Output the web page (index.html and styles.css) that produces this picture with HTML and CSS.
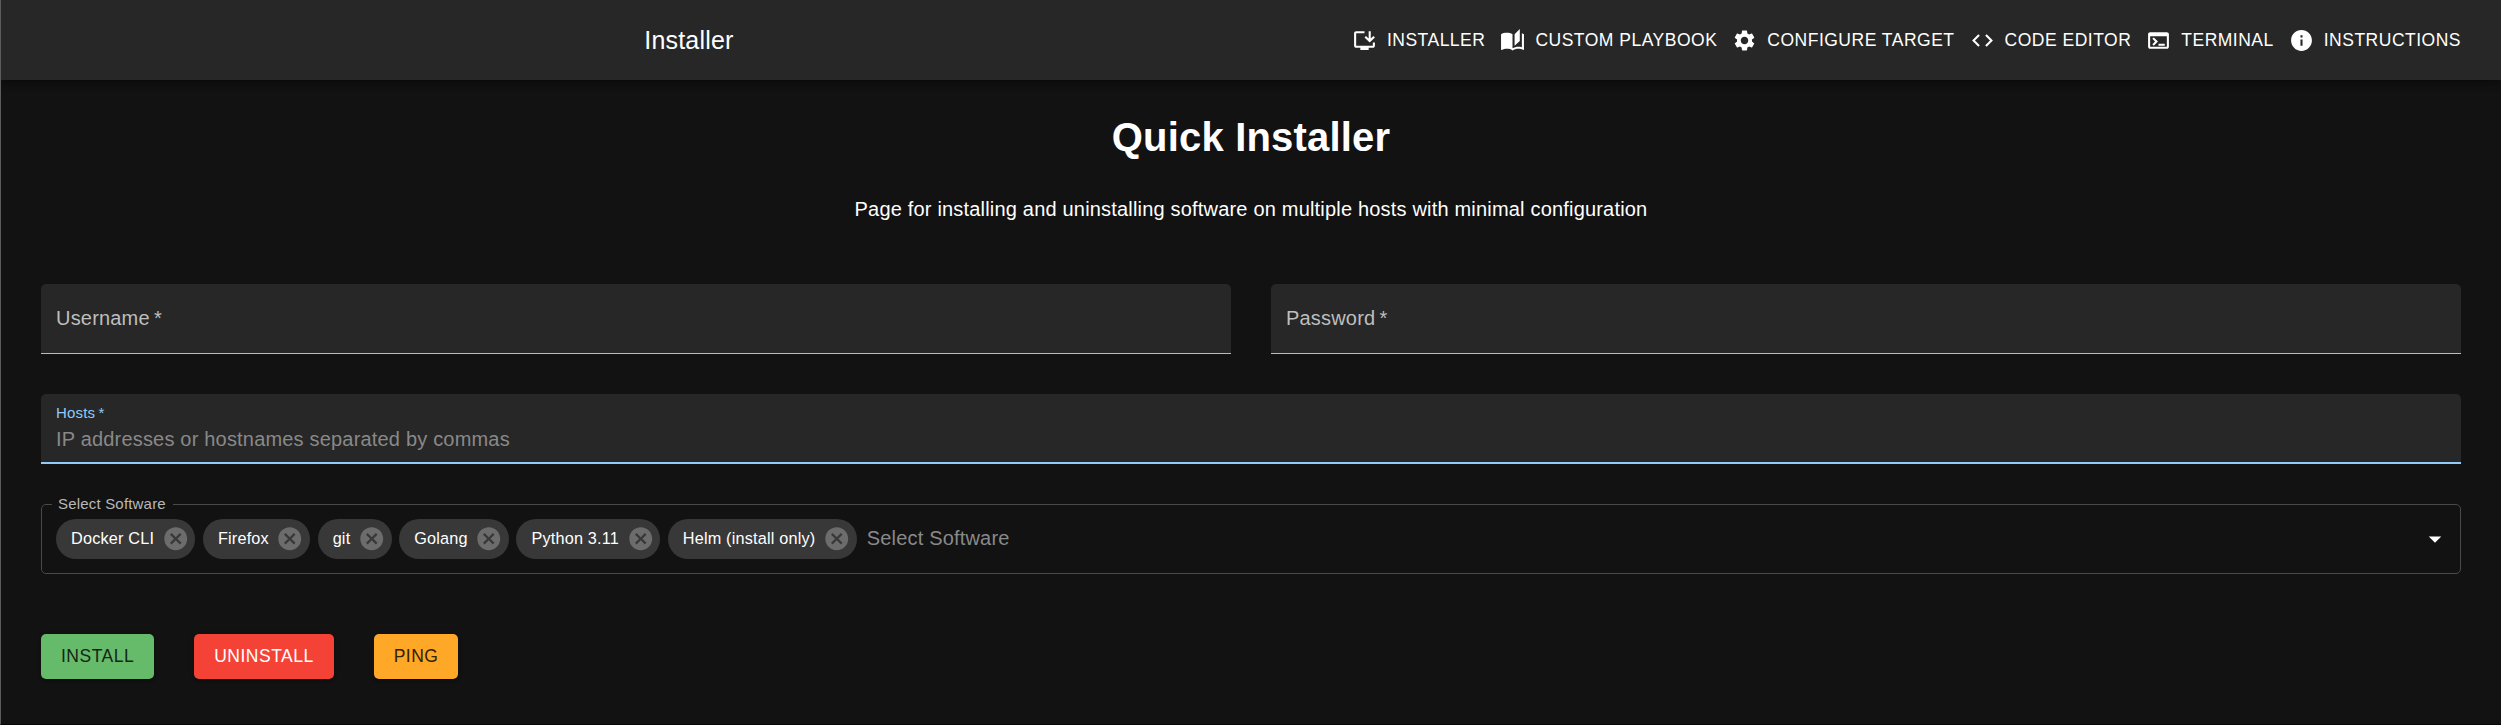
FILE: index.html
```html
<!DOCTYPE html>
<html lang="en">
<head>
<meta charset="utf-8">
<title>Quick Installer</title>
<link rel="stylesheet" href="styles.css">
</head>
<body>
<svg class="defs" width="0" height="0" aria-hidden="true">
  <symbol id="cancel" viewBox="0 0 24 24"><path d="M12 2C6.47 2 2 6.47 2 12s4.47 10 10 10 10-4.47 10-10S17.53 2 12 2zm5 13.59L15.59 17 12 13.41 8.41 17 7 15.59 10.59 12 7 8.41 8.41 7 12 10.59 15.59 7 17 8.41 13.41 12 17 15.59z"/></symbol>
</svg>
<header class="appbar">
  <div class="appbar-title">Installer</div>
  <nav class="nav">
    <a class="nav-item"><svg class="nav-icon" viewBox="0 0 24 24"><path d="M20 17H4V5h8V3H4c-1.1 0-2 .9-2 2v12c0 1.1.9 2 2 2h4v2h8v-2h4c1.1 0 2-.9 2-2v-3h-2v3z"/><path d="m17 14 5-5-1.41-1.41L18 10.17V3h-2v7.17l-2.59-2.58L12 9z"/></svg><span>INSTALLER</span></a>
    <a class="nav-item"><svg class="nav-icon" viewBox="0 0 24 24"><path d="m19 1-5 5v11l5-4.500V1zM1 6v14.650c0 .25.25.5.5.5.1 0 .15-.05.25-.05C3.1 20.450 5.050 20 6.500 20c1.950 0 4.050.4 5.500 1.500V6c-1.450-1.100-3.550-1.500-5.500-1.500S2.450 4.900 1 6zm22 13.500V6c-.6-.45-1.250-.75-2-1v13.500c-1.100-.35-2.300-.5-3.500-.5-1.700 0-4.150.65-5.500 1.500v2c1.350-.85 3.800-1.500 5.500-1.500 1.650 0 3.350.3 4.750 1.050.1.05.15.05.25.05.25 0 .5-.25.5-.5v-1.100z"/></svg><span>CUSTOM PLAYBOOK</span></a>
    <a class="nav-item"><svg class="nav-icon" viewBox="0 0 24 24"><path d="M19.14 12.94c.04-.3.06-.61.06-.94 0-.32-.02-.64-.07-.94l2.030-1.580c.18-.14.23-.41.12-.61l-1.920-3.320c-.12-.22-.37-.29-.59-.22l-2.390.96c-.5-.38-1.030-.7-1.620-.94l-.36-2.540c-.04-.24-.24-.41-.48-.41h-3.840c-.24 0-.43.17-.47.41l-.36 2.540c-.59.24-1.130.57-1.620.94l-2.390-.96c-.22-.08-.47 0-.59.22L2.740 8.870c-.12.21-.08.47.12.61l2.030 1.580c-.05.3-.09.63-.09.94s.02.64.07.94l-2.030 1.580c-.18.14-.23.41-.12.61l1.920 3.320c.12.22.37.29.59.22l2.390-.96c.5.38 1.030.7 1.620.94l.36 2.540c.05.24.24.41.48.41h3.840c.24 0 .44-.17.47-.41l.36-2.540c.59-.24 1.130-.56 1.620-.94l2.390.96c.22.08.47 0 .59-.22l1.920-3.320c.12-.22.07-.47-.12-.61l-2.010-1.580zM12 15.600c-1.980 0-3.600-1.620-3.600-3.600s1.620-3.600 3.600-3.600 3.600 1.620 3.600 3.600-1.620 3.600-3.600 3.600z"/></svg><span>CONFIGURE TARGET</span></a>
    <a class="nav-item"><svg class="nav-icon" viewBox="0 0 24 24"><path d="M9.400 16.600 4.800 12l4.600-4.600L8 6l-6 6 6 6 1.400-1.400zm5.200 0 4.600-4.600-4.600-4.600L16 6l6 6-6 6-1.400-1.400z"/></svg><span>CODE EDITOR</span></a>
    <a class="nav-item"><svg class="nav-icon" viewBox="0 0 24 24"><path d="M20 4H4c-1.110 0-2 .9-2 2v12c0 1.100.89 2 2 2h16c1.100 0 2-.9 2-2V6c0-1.100-.89-2-2-2zm0 14H4V8h16v10zm-2-1h-6v-2h6v2zM7.500 17l-1.410-1.410L8.670 13l-2.590-2.590L7.500 9l4 4-4 4z"/></svg><span>TERMINAL</span></a>
    <a class="nav-item"><svg class="nav-icon" viewBox="0 0 24 24"><path d="M12 2C6.480 2 2 6.480 2 12s4.480 10 10 10 10-4.480 10-10S17.520 2 12 2zm1 15h-2v-6h2v6zm0-8h-2V7h2v2z"/></svg><span>INSTRUCTIONS</span></a>
  </nav>
</header>
<main class="page">
  <h1 class="heading">Quick Installer</h1>
  <p class="lead">Page for installing and uninstalling software on multiple hosts with minimal configuration</p>
  <div class="credentials">
    <div class="field"><span class="field-label">Username&thinsp;*</span></div>
    <div class="field"><span class="field-label">Password&thinsp;*</span></div>
  </div>
  <div class="field field-focused">
    <span class="field-caption">Hosts&thinsp;*</span>
    <span class="placeholder">IP addresses or hostnames separated by commas</span>
  </div>
  <fieldset class="select">
    <legend class="select-legend">Select Software</legend>
    <div class="select-body">
      <span class="chip"><span class="chip-label">Docker CLI</span><svg class="chip-x"><use href="#cancel"/></svg></span>
      <span class="chip"><span class="chip-label">Firefox</span><svg class="chip-x"><use href="#cancel"/></svg></span>
      <span class="chip"><span class="chip-label">git</span><svg class="chip-x"><use href="#cancel"/></svg></span>
      <span class="chip"><span class="chip-label">Golang</span><svg class="chip-x"><use href="#cancel"/></svg></span>
      <span class="chip"><span class="chip-label">Python 3.11</span><svg class="chip-x"><use href="#cancel"/></svg></span>
      <span class="chip"><span class="chip-label">Helm (install only)</span><svg class="chip-x"><use href="#cancel"/></svg></span>
      <span class="placeholder select-placeholder">Select Software</span>
      <svg class="caret" viewBox="0 0 24 24"><path d="M7 10l5 5 5-5z"/></svg>
    </div>
  </fieldset>
  <div class="actions">
    <button class="btn btn-install">INSTALL</button>
    <button class="btn btn-uninstall">UNINSTALL</button>
    <button class="btn btn-ping">PING</button>
  </div>
</main>
</body>
</html>
```

FILE: styles.css
```css
* { box-sizing: border-box; }

body {
  margin: 0;
  height: 725px;
  overflow: hidden;
  border-left: 1px solid #5c5c5c;
  border-bottom: 1px solid #060606;
  background: #121212;
  color: #fff;
  font-family: "Liberation Sans", Arial, sans-serif;
  font-size: 20px;
  line-height: 30px;
  letter-spacing: 0.1876px;
}

.defs { display: block; }

.appbar {
  display: flex;
  align-items: center;
  height: 80px;
  padding: 0 30px;
  background: #272727;
  box-shadow: 0 2.5px 5px -1px rgba(0, 0, 0, 0.2), 0 5px 6px rgba(0, 0, 0, 0.14), 0 1px 12px rgba(0, 0, 0, 0.12);
}

.appbar-title {
  flex: 1;
  text-align: center;
  font-size: 25px;
  line-height: 40px;
}

.nav { display: flex; }

.nav-item {
  display: flex;
  align-items: center;
  gap: 10px;
  height: 46px;
  padding: 0 10px 0 5px;
  font-size: 17.5px;
  letter-spacing: 0.5px;
  white-space: nowrap;
}

.nav-icon {
  width: 25px;
  height: 25px;
  fill: #fff;
}

.page { padding: 27px 40px 0; }

.heading {
  margin: 0;
  font-size: 40px;
  line-height: 60px;
  text-align: center;
}

.lead {
  margin: 27px 0 60px;
  text-align: center;
}

.credentials {
  display: grid;
  grid-template-columns: 1fr 1fr;
  gap: 40px;
  margin-bottom: 40px;
}

.field {
  display: flex;
  flex-direction: column;
  height: 70px;
  padding: 0 15px;
  border-bottom: 1px solid #bcbcbc;
  border-radius: 5px 5px 0 0;
  background: #272727;
}

.field-label {
  margin-top: 19px;
  color: #bebebe;
}

.field-focused { border-bottom: 2px solid #90caf9; }

.field-caption {
  margin-top: 9px;
  color: #90caf9;
  font-size: 15px;
  line-height: 20px;
}

.placeholder { color: #898989; }

.field-focused .placeholder { margin-top: 1px; }

.select {
  min-width: 0;
  height: 78px;
  margin: 32px 0 0;
  padding: 0 10px;
  border: 1px solid #4a4a4a;
  border-radius: 5px;
}

.select-legend {
  padding: 0 7px 2px 6px;
  color: #b8b8b8;
  font-size: 15px;
  line-height: 15px;
}

.select-body {
  display: flex;
  align-items: center;
  gap: 7.5px;
  padding: 6px 0 0 4px;
}

.chip {
  display: flex;
  align-items: center;
  height: 40px;
  padding-left: 15px;
  border-radius: 20px;
  background: #383838;
  font-size: 16.25px;
  white-space: nowrap;
}

.chip-label { padding-bottom: 2px; }

.chip-x {
  width: 27.5px;
  height: 27.5px;
  margin: 0 6.25px 0 7.5px;
  fill: #6c6c6c;
}

.select-placeholder {
  flex: 1;
  padding: 0 0 2px 2.5px;
}

.caret {
  width: 30px;
  height: 30px;
  fill: #fff;
}

.actions {
  display: flex;
  gap: 40px;
  margin-top: 60px;
}

.btn {
  height: 45px;
  padding: 0 20px;
  border: 0;
  border-radius: 5px;
  box-shadow: 0 3px 1px -2px rgba(0, 0, 0, 0.2), 0 2px 2px rgba(0, 0, 0, 0.14), 0 1px 5px rgba(0, 0, 0, 0.12);
  font-family: inherit;
  font-size: 17.5px;
  letter-spacing: 0.5px;
}

.btn-install { background: #66bb6a; color: #142515; }
.btn-uninstall { background: #f44336; color: #fff; }
.btn-ping { background: #ffa726; color: #332108; }
```
